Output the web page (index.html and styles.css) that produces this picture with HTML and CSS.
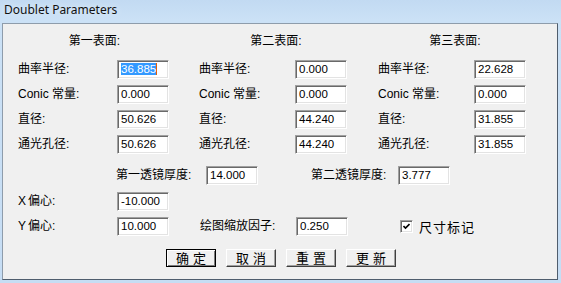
FILE: index.html
```html
<!DOCTYPE html>
<html lang="zh-CN">
<head>
    <meta charset="UTF-8">
    <meta name="viewport" content="width=device-width, initial-scale=1.0">
    <title>Doublet Parameters</title>
    <link rel="stylesheet" href="styles.css">
</head>
<body>
    <div class="window">
        <div class="titlebar">Doublet Parameters</div>

        <div class="client">
            <div class="surfaces">
                <div class="surface first">
                    <div class="surface-title">第一表面:</div>
                    <div class="fields">
                        <span class="label">曲率半径:</span>
                        <div class="edit"><span class="selected">36.885</span></div>
                        <span class="label">Conic 常量:</span>
                        <div class="edit">0.000</div>
                        <span class="label">直径:</span>
                        <div class="edit">50.626</div>
                        <span class="label">通光孔径:</span>
                        <div class="edit">50.626</div>
                    </div>
                </div>

                <div class="surface">
                    <div class="surface-title">第二表面:</div>
                    <div class="fields">
                        <span class="label">曲率半径:</span>
                        <div class="edit">0.000</div>
                        <span class="label">Conic 常量:</span>
                        <div class="edit">0.000</div>
                        <span class="label">直径:</span>
                        <div class="edit">44.240</div>
                        <span class="label">通光孔径:</span>
                        <div class="edit">44.240</div>
                    </div>
                </div>

                <div class="surface">
                    <div class="surface-title">第三表面:</div>
                    <div class="fields">
                        <span class="label">曲率半径:</span>
                        <div class="edit">22.628</div>
                        <span class="label">Conic 常量:</span>
                        <div class="edit">0.000</div>
                        <span class="label">直径:</span>
                        <div class="edit">31.855</div>
                        <span class="label">通光孔径:</span>
                        <div class="edit">31.855</div>
                    </div>
                </div>
            </div>

            <div class="thickness-row">
                <span class="label thick1">第一透镜厚度:</span>
                <div class="edit">14.000</div>
                <span class="label thick2">第二透镜厚度:</span>
                <div class="edit">3.777</div>
            </div>

            <div class="row x-row">
                <span class="label offset"><span class="axis">X</span>偏心:</span>
                <div class="edit">-10.000</div>
            </div>

            <div class="row y-row">
                <span class="label offset"><span class="axis">Y</span>偏心:</span>
                <div class="edit">10.000</div>
                <span class="label scale">绘图缩放因子:</span>
                <div class="edit">0.250</div>
                <label class="check">
                    <span class="box">
                        <svg width="7" height="7" viewBox="0 0 7 7"><path d="M0.5 3 L2.5 5 L6.5 1" fill="none" stroke="#000" stroke-width="1.6"/></svg>
                    </span>
                    <span class="check-text">尺寸标记</span>
                </label>
            </div>

            <div class="buttons">
                <button class="btn default">确定</button>
                <button class="btn">取消</button>
                <button class="btn">重置</button>
                <button class="btn">更新</button>
            </div>
        </div>
    </div>
</body>
</html>
```

FILE: styles.css
```css
body {
    margin: 0;
    background-color: #c6ddf4;
    font-family: "Liberation Sans", "Noto Sans CJK SC", sans-serif;
    font-size: 12px;
    color: #000;
}

.window {
    width: 561px;
    height: 283px;
    overflow: hidden;
    background: linear-gradient(to bottom, #c2daf2, #cbe1f6 20px, #c6ddf4);
}

.titlebar {
    height: 23px;
    line-height: 20px;
    padding-left: 4px;
    font-family: "Noto Sans", sans-serif;
    font-size: 12px;
    color: #111;
    text-shadow: 0 0 6px #e8f2fc;
}

.client {
    margin-left: 2px;
    width: 556px;
    height: 257px;
    box-sizing: border-box;
    background-color: #f0f0f0;
    border-top: 1px solid #8e9cab;
    border-left: 1px solid #8e9cab;
    border-right: 1px solid #4f5d6d;
    border-bottom: 1px solid #4f5d6d;
    padding: 9px 0 0 15px;
}

.label {
    white-space: nowrap;
    line-height: 19px;
}

.axis {
    margin-right: 2px;
}

/* sunken edit box */
.edit {
    width: 52px;
    height: 19px;
    box-sizing: border-box;
    background: #fff;
    border-top: 1px solid #a0a0a0;
    border-left: 1px solid #a0a0a0;
    border-right: 1px solid #fff;
    border-bottom: 1px solid #fff;
    box-shadow: inset 1px 1px 0 #696969, inset -1px -1px 0 #e3e3e3;
    padding-left: 3px;
    font-size: 11.5px;
    line-height: 17px;
    white-space: nowrap;
    overflow: hidden;
}

.selected {
    background-color: #3399ff;
    color: #fff;
    border-right: 1px solid #e0600a;
}

.surfaces {
    display: flex;
    gap: 30px;
}

.surface + .surface + .surface {
    margin-left: 1px;
}

.surface-title {
    height: 16px;
    line-height: 16px;
    margin-bottom: 11px;
    text-align: center;
    padding-left: 6px;
}

.fields {
    display: grid;
    grid-template-columns: 96px 52px;
    row-gap: 6px;
}

.first .fields {
    grid-template-columns: 99px 52px;
}

.first .surface-title {
    padding-left: 2px;
}

.thickness-row {
    display: flex;
    margin-top: 12px;
    padding-left: 98px;
}

.thick1 {
    width: 90px;
}

.thick2 {
    width: 87px;
    margin-left: 53px;
}

.row {
    display: flex;
    align-items: center;
}

.x-row {
    margin-top: 7px;
}

.y-row {
    margin-top: 6px;
}

.offset {
    width: 99px;
}

.scale {
    width: 96px;
    margin-left: 31px;
}

.check {
    display: flex;
    align-items: center;
    margin-left: 52px;
}

.box {
    width: 13px;
    height: 13px;
    box-sizing: border-box;
    background: #fff;
    border-top: 1px solid #a0a0a0;
    border-left: 1px solid #a0a0a0;
    border-right: 1px solid #fff;
    border-bottom: 1px solid #fff;
    box-shadow: inset 1px 1px 0 #696969, inset -1px -1px 0 #e3e3e3;
    display: flex;
    align-items: center;
    justify-content: center;
}

.check-text {
    margin-left: 6px;
    font-size: 13px;
    letter-spacing: 1px;
}

.buttons {
    display: flex;
    gap: 10px;
    margin-top: 13px;
    padding-left: 148px;
}

.btn {
    width: 50px;
    height: 18px;
    padding: 0;
    box-sizing: border-box;
    background-color: #f0f0f0;
    font-family: "Noto Sans CJK SC", sans-serif;
    font-size: 13px;
    letter-spacing: 4px;
    text-indent: 4px;
    line-height: 14px;
    color: #000;
    border-top: 1px solid #fff;
    border-left: 1px solid #fff;
    border-right: 1px solid #404040;
    border-bottom: 1px solid #404040;
    box-shadow: inset -1px -1px 0 #a0a0a0;
    cursor: pointer;
}

.btn.default {
    border: 1px solid #000;
    box-shadow: inset 1px 1px 0 #fff, inset -1px -1px 0 #7a7a7a;
}
```
